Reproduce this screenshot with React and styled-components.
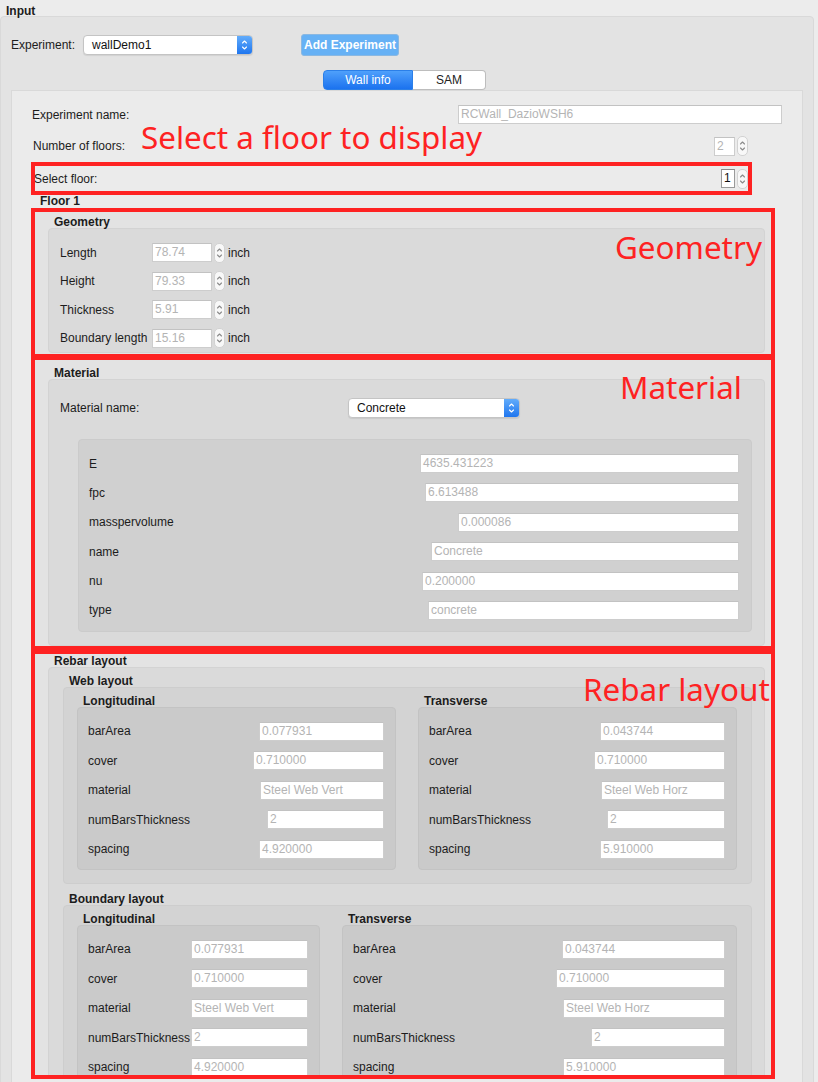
import React from "react";
import styled, { createGlobalStyle } from "styled-components";

const GlobalStyle = createGlobalStyle`
  body {
    margin: 0;
    background: #ececec;
    font-family: "Liberation Sans", Arial, sans-serif;
    font-size: 12px;
    color: #1c1c1c;
    overflow: hidden;
  }
`;

const Window = styled.div`
  width: 818px;
  height: 1082px;
  overflow: hidden;
  background: #ececec;
`;

const TopTitle = styled.div`
  font-weight: bold;
  line-height: 14px;
  padding: 4px 0 0 6px;
  margin-bottom: -2px;
`;

const OuterGroup = styled.div`
  width: 814px;
  box-sizing: border-box;
  background: #e3e3e3;
  border: 1px solid #d9d9d9;
  border-radius: 4px;
  padding-top: 17px;
  height: 1100px;
`;

const ExperimentRow = styled.div`
  display: flex;
  align-items: center;
  height: 22px;
  padding-left: 10px;
`;

const Label = styled.span`
  white-space: nowrap;
  margin-left: ${(p) => p.$ml || 0}px;
  ${(p) => (p.$w ? `width: ${p.$w}px; flex-shrink: 0;` : "")}
`;

const Combo = styled.div`
  display: flex;
  width: ${(p) => p.$w}px;
  height: 20px;
  margin-left: ${(p) => p.$ml || 0}px;
  box-sizing: border-box;
  background: #fff;
  border: 1px solid #c4c4c4;
  border-radius: 4px;
  overflow: hidden;
  box-shadow: 0 1px 1px rgba(0, 0, 0, 0.08);
`;

const ComboText = styled.span`
  flex: 1;
  padding-left: 8px;
  line-height: 18px;
  color: #111;
`;

const ComboArrow = styled.span`
  width: 15px;
  display: flex;
  align-items: center;
  justify-content: center;
  background: linear-gradient(#62acfb, #1f76ef);
`;

const AddButton = styled.div`
  margin-left: 48px;
  width: 98px;
  height: 22px;
  box-sizing: border-box;
  display: flex;
  align-items: center;
  justify-content: center;
  background: #66b1f5;
  border: 1px solid #8ab8e2;
  border-radius: 3px;
  color: #fff;
  font-weight: bold;
`;

const Tabs = styled.div`
  display: flex;
  margin: 14px 0 0 322px;
`;

const Tab = styled.div`
  width: ${(p) => p.$w}px;
  height: 20px;
  box-sizing: border-box;
  display: flex;
  align-items: center;
  justify-content: center;
  ${(p) =>
    p.$active
      ? `background: linear-gradient(#4fa0fb, #1b72ef);
         color: #fff;
         border: 1px solid #2b7fe8;
         border-radius: 4px 0 0 4px;`
      : `background: #fff;
         color: #222;
         border: 1px solid #bdbdbd;
         border-left: none;
         border-radius: 0 4px 4px 0;`}
`;

const TabPanel = styled.div`
  position: relative;
  margin: 0 10px;
  background: #ebebeb;
  border: 1px solid #d9d9d9;
  padding-left: 19px;
  height: 1000px;
`;

const FormRow = styled.div`
  display: flex;
  align-items: center;
  justify-content: space-between;
  width: ${(p) => p.$w}px;
  height: ${(p) => p.$h || 19}px;
  margin-top: ${(p) => p.$mt || 0}px;
`;

const Field = styled.div`
  width: ${(p) => p.$w}px;
  height: 19px;
  box-sizing: border-box;
  flex-shrink: 0;
  margin-left: ${(p) => (p.$auto ? "auto" : "0")};
  background: #fff;
  border: 1px solid ${(p) => (p.$dark ? "#9a9a9a" : "#cdcdcd")};
  border-top-color: ${(p) => (p.$dark ? "#8a8a8a" : "#c2c2c2")};
  color: ${(p) => (p.$dark ? "#111" : "#b4b4b4")};
  padding-left: 2px;
  line-height: 17px;
  white-space: nowrap;
  overflow: hidden;
`;

const StepperBox = styled.span`
  display: inline-flex;
  align-items: center;
  justify-content: center;
  width: 11px;
  height: 20px;
  margin-left: 2px;
  box-sizing: border-box;
  background: #f8f8f8;
  border: 1px solid #d2d2d2;
  border-radius: 5px;
  flex-shrink: 0;
`;

const SpinGroup = styled.div`
  display: flex;
  align-items: center;
`;

const RedFrame = styled.div`
  position: relative;
  box-sizing: border-box;
  width: ${(p) => p.$w}px;
  height: ${(p) => p.$h}px;
  margin-top: ${(p) => p.$mt || 0}px;
  border: 4px solid #fe2222;
  background: ${(p) => p.$bg || "#e3e3e3"};
  overflow: hidden;
`;

const SelectFloorFrame = styled(RedFrame)`
  display: flex;
  align-items: center;
  justify-content: space-between;
`;

const SectionBody = styled.div`
  padding: 0 6px 0 13px;
`;

const Annotation = styled.div`
  position: absolute;
  top: ${(p) => p.$top}px;
  left: ${(p) => p.$left}px;
  font-family: "Noto Sans", sans-serif;
  font-size: 31.4px;
  line-height: 1;
  color: #fe2222;
  white-space: nowrap;
  z-index: 2;
`;

const FloorTitle = styled.div`
  font-weight: bold;
  height: 13px;
  line-height: 13px;
  margin-left: 9px;
`;

const GroupTitle = styled.div`
  position: relative;
  z-index: 1;
  font-weight: bold;
  line-height: 14px;
  padding: ${(p) => (p.$pt === undefined ? 6 : p.$pt)}px 0 0 6px;
  margin-bottom: -1px;
  white-space: nowrap;
`;

const GroupBox = styled.div`
  background: ${(p) => p.$bg};
  border: 1px solid ${(p) => p.$line};
  border-radius: 4px;
  padding: ${(p) => p.$pad};
  margin: ${(p) => p.$margin || 0};
  box-sizing: border-box;
`;

const Rows = styled.div`
  display: flex;
  flex-direction: column;
  gap: ${(p) => p.$gap}px;
`;

const Row = styled.div`
  display: flex;
  align-items: center;
  height: ${(p) => p.$h || 19}px;
`;

const Unit = styled.span`
  margin-left: 3px;
`;

const Columns = styled.div`
  display: flex;
  gap: 22px;
  align-items: flex-start;
`;

const Column = styled.div`
  flex: ${(p) => (p.$basis ? `0 0 ${p.$basis}px` : "1")};
  min-width: 0;
`;

const Chevrons = ({ color = "#8a8a8a" }) => (
  <svg width="7" height="14" viewBox="0 0 7 14">
    <path
      d="M1.5 5 L3.5 3 L5.5 5 M1.5 9 L3.5 11 L5.5 9"
      fill="none"
      stroke={color}
      strokeWidth="1.1"
      strokeLinecap="round"
      strokeLinejoin="round"
    />
  </svg>
);

const Stepper = () => (
  <StepperBox>
    <Chevrons />
  </StepperBox>
);

const ComboBox = ({ width, ml, text }) => (
  <Combo $w={width} $ml={ml}>
    <ComboText>{text}</ComboText>
    <ComboArrow>
      <Chevrons color="#fff" />
    </ComboArrow>
  </Combo>
);

const geometry = [
  ["Length", "78.74"],
  ["Height", "79.33"],
  ["Thickness", "5.91"],
  ["Boundary length", "15.16"],
];

const material = [
  ["E", "4635.431223", 319],
  ["fpc", "6.613488", 314],
  ["masspervolume", "0.000086", 281],
  ["name", "Concrete", 308],
  ["nu", "0.200000", 317],
  ["type", "concrete", 311],
];

const rebarLabels = ["barArea", "cover", "material", "numBarsThickness", "spacing"];

const webLong = [["0.077931", 125], ["0.710000", 131], ["Steel Web Vert", 124], ["2", 117], ["4.920000", 125]];
const webTrans = [["0.043744", 125], ["0.710000", 131], ["Steel Web Horz", 124], ["2", 118], ["5.910000", 125]];
const bndLong = [["0.077931", 117], ["0.710000", 117], ["Steel Web Vert", 117], ["2", 117], ["4.920000", 117]];
const bndTrans = [["0.043744", 163], ["0.710000", 169], ["Steel Web Horz", 162], ["2", 134], ["5.910000", 162]];

const RebarGroup = ({ title, values }) => (
  <>
    <GroupTitle>{title}</GroupTitle>
    <GroupBox $bg="#cacaca" $line="#c3c3c3" $pad="13.5px 11px 10.5px 10px">
      <Rows $gap={10.5}>
        {rebarLabels.map((label, i) => (
          <Row key={label}>
            <Label>{label}</Label>
            <Field $w={values[i][1]} $auto>
              {values[i][0]}
            </Field>
          </Row>
        ))}
      </Rows>
    </GroupBox>
  </>
);

const App = () => {
  return (
    <Window>
      <GlobalStyle />
      <TopTitle>Input</TopTitle>
      <OuterGroup>
        <ExperimentRow>
          <Label>Experiment:</Label>
          <ComboBox width={170} ml={8} text="wallDemo1" />
          <AddButton>Add Experiment</AddButton>
        </ExperimentRow>
        <Tabs>
          <Tab $w={90} $active>
            Wall info
          </Tab>
          <Tab $w={73}>SAM</Tab>
        </Tabs>
        <TabPanel>
          <Annotation $top={29.5} $left={129}>
            Select a floor to display
          </Annotation>
          <FormRow $w={751} $mt={14}>
            <Label $ml={1}>Experiment name:</Label>
            <Field $w={324}>RCWall_DazioWSH6</Field>
          </FormRow>
          <FormRow $w={717} $mt={12} $h={20}>
            <Label $ml={2}>Number of floors:</Label>
            <SpinGroup>
              <Field $w={21}>2</Field>
              <Stepper />
            </SpinGroup>
          </FormRow>
          <SelectFloorFrame $w={721} $h={33} $mt={6} $bg="#ebebeb">
            <Label $ml={-1}>Select floor:</Label>
            <SpinGroup>
              <Field $w={14} $dark>
                1
              </Field>
              <Stepper />
            </SpinGroup>
          </SelectFloorFrame>
          <FloorTitle>Floor 1</FloorTitle>

          <RedFrame $w={744} $h={150}>
            <Annotation $top={18.5} $left={580}>
              Geometry
            </Annotation>
            <SectionBody>
              <GroupTitle $pt={3}>Geometry</GroupTitle>
              <GroupBox $bg="#dadada" $line="#d3d3d3" $pad="14px 11px 4px 11px">
                <Rows $gap={9.5}>
                  {geometry.map(([label, value]) => (
                    <Row key={label}>
                      <Label $w={92}>{label}</Label>
                      <Field $w={60}>{value}</Field>
                      <Stepper />
                      <Unit>inch</Unit>
                    </Row>
                  ))}
                </Rows>
              </GroupBox>
            </SectionBody>
          </RedFrame>

          <RedFrame $w={744} $h={294} $mt={-2}>
            <Annotation $top={10.5} $left={585}>
              Material
            </Annotation>
            <SectionBody>
              <GroupTitle>Material</GroupTitle>
              <GroupBox $bg="#dadada" $line="#d3d3d3" $pad="18px 0 13px 11px">
                <Row $h={20}>
                  <Label $w={288}>Material name:</Label>
                  <ComboBox width={172} text="Concrete" />
                </Row>
                <GroupBox
                  $bg="#d0d0d0"
                  $line="#cbcbcb"
                  $pad="14px 12px 11px 10px"
                  $margin="21px 12px 0 18px"
                >
                  <Rows $gap={10.4}>
                    {material.map(([label, value, w]) => (
                      <Row key={label}>
                        <Label>{label}</Label>
                        <Field $w={w} $auto>
                          {value}
                        </Field>
                      </Row>
                    ))}
                  </Rows>
                </GroupBox>
              </GroupBox>
            </SectionBody>
          </RedFrame>

          <RedFrame $w={744} $h={429}>
            <Annotation $top={18.5} $left={548}>
              Rebar layout
            </Annotation>
            <SectionBody>
              <GroupTitle $pt={0}>Rebar layout</GroupTitle>
              <GroupBox $bg="#dadada" $line="#d3d3d3" $pad="0 12px 20px 14px">
                <GroupTitle>Web layout</GroupTitle>
                <GroupBox $bg="#d3d3d3" $line="#cdcdcd" $pad="0 14px 13px 13px">
                  <Columns>
                    <Column>
                      <RebarGroup title="Longitudinal" values={webLong} />
                    </Column>
                    <Column>
                      <RebarGroup title="Transverse" values={webTrans} />
                    </Column>
                  </Columns>
                </GroupBox>
                <GroupTitle $pt={8}>Boundary layout</GroupTitle>
                <GroupBox $bg="#d3d3d3" $line="#cdcdcd" $pad="0 14px 13px 13px">
                  <Columns>
                    <Column $basis={243}>
                      <RebarGroup title="Longitudinal" values={bndLong} />
                    </Column>
                    <Column>
                      <RebarGroup title="Transverse" values={bndTrans} />
                    </Column>
                  </Columns>
                </GroupBox>
              </GroupBox>
            </SectionBody>
          </RedFrame>
        </TabPanel>
      </OuterGroup>
    </Window>
  );
};

export default App;
